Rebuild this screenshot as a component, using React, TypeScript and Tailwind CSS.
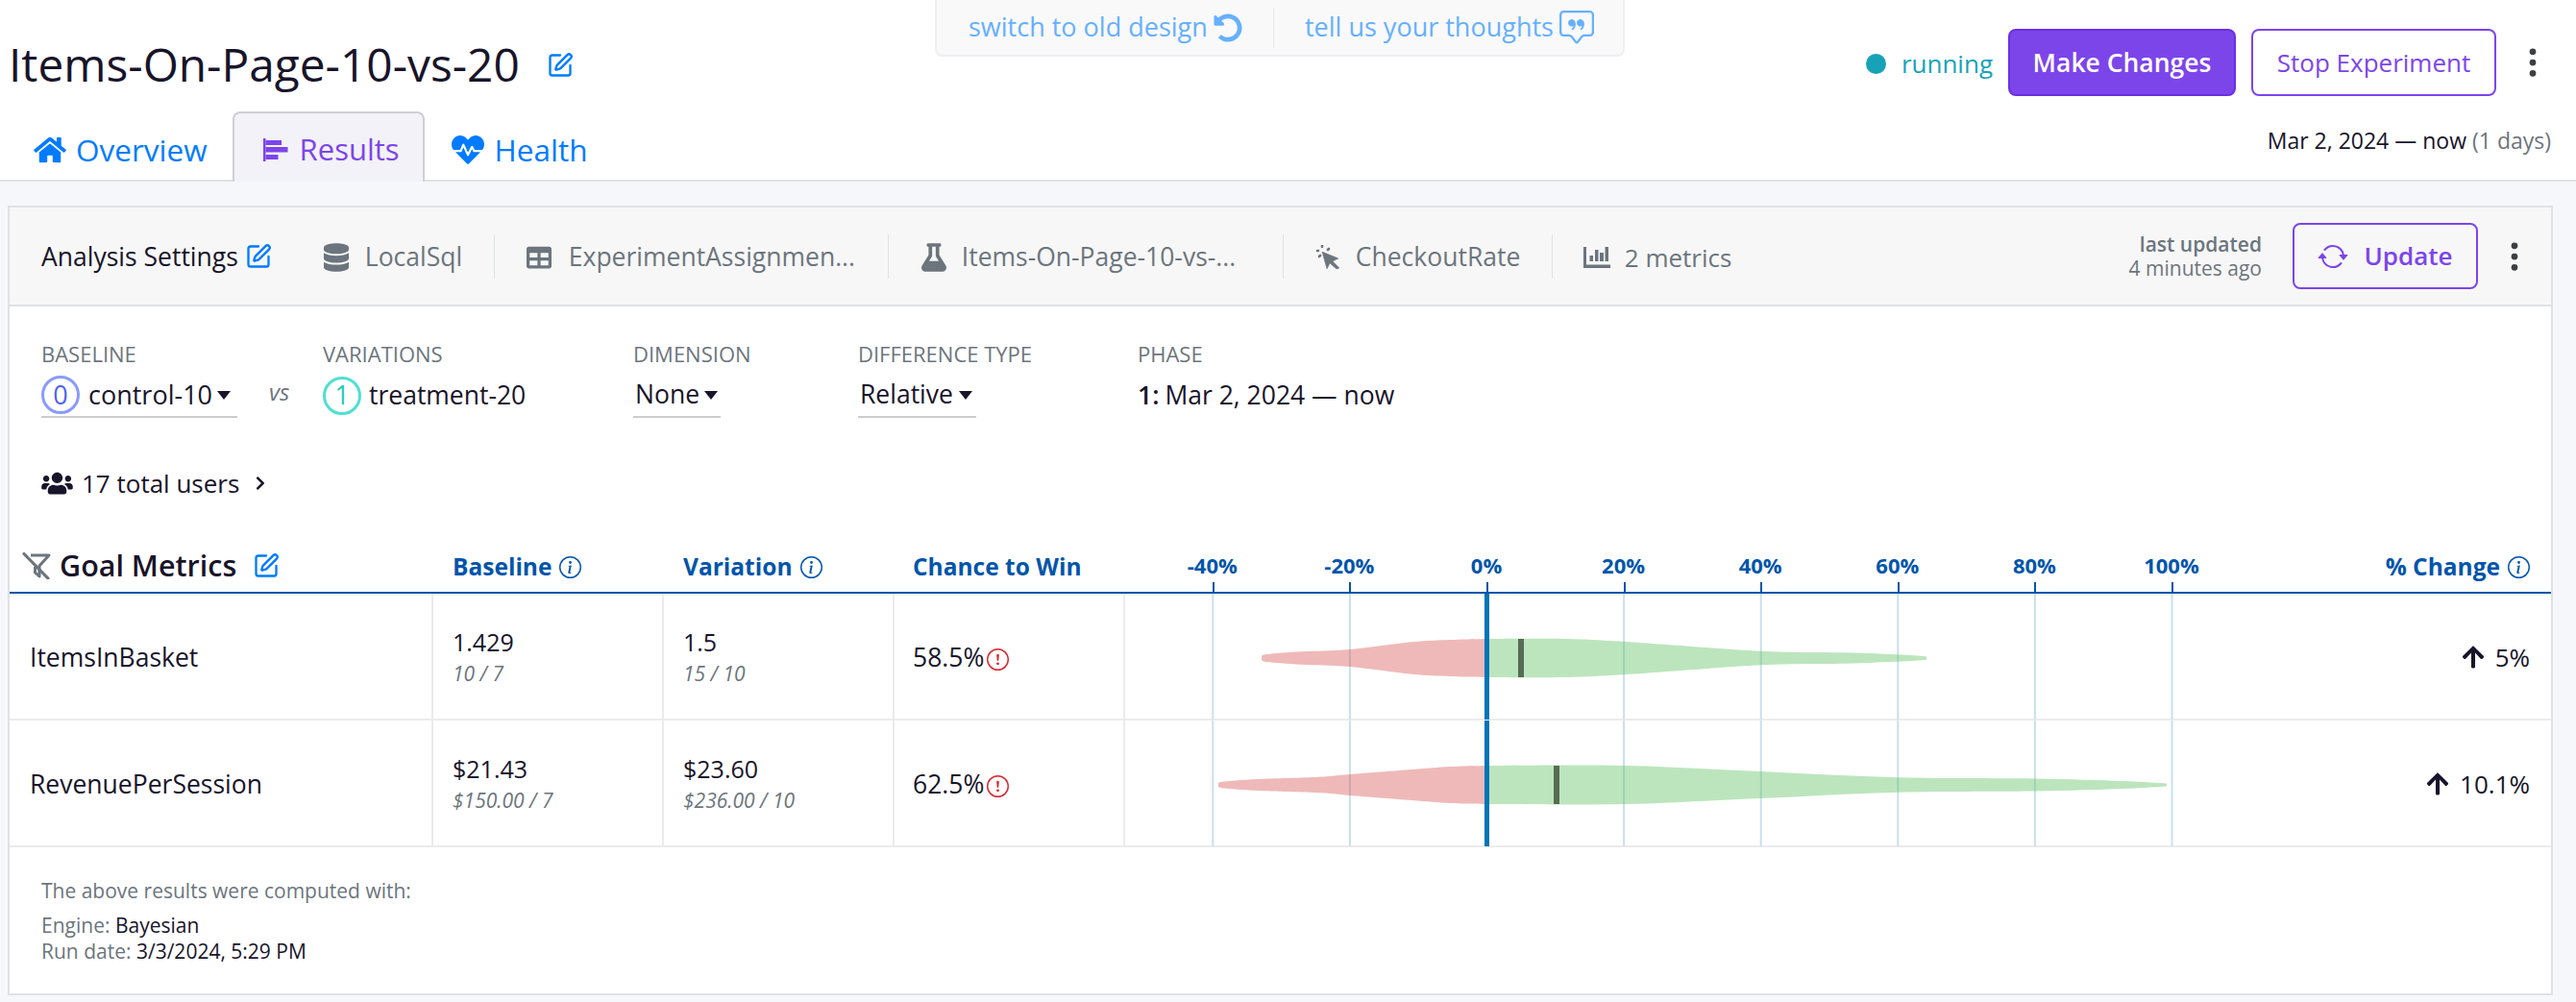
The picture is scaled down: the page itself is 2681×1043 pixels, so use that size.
import React from "react";
import { FaHome, FaHeartbeat, FaDatabase, FaTable, FaFlask, FaUsers, FaChevronRight, FaArrowUp, FaUndoAlt } from "react-icons/fa";
import { BsArrowRepeat, BsChatSquareQuote, BsInfoCircle, BsExclamationCircle, BsThreeDotsVertical } from "react-icons/bs";
import { SquarePen } from "lucide-react";

const ticks = [-40, -20, 0, 20, 40, 60, 80, 100];
const PX = 7.13;
const ZERO = 378;

function smooth(pts: number[][]) {
  let d = `M${pts[0][0]} ${pts[0][1]}`;
  for (let i = 0; i < pts.length - 1; i++) {
    const p0 = pts[Math.max(i - 1, 0)], p1 = pts[i], p2 = pts[i + 1], p3 = pts[Math.min(i + 2, pts.length - 1)];
    d += ` C${p1[0] + (p2[0] - p0[0]) / 6} ${p1[1] + (p2[1] - p0[1]) / 6} ${p2[0] - (p3[0] - p1[0]) / 6} ${p2[1] - (p3[1] - p1[1]) / 6} ${p2[0]} ${p2[1]}`;
  }
  return d;
}

function violin(shape: number[][], cy: number) {
  const top = shape.map(([x, h]) => [x, cy - h]);
  const bottom = [...shape].reverse().map(([x, h]) => [x, cy + h]);
  return smooth(top) + " L" + smooth(bottom).slice(1) + " Z";
}

function ChartCell({ neg, pos, mean, cy }: { neg: number[][]; pos: number[][]; mean: number; cy: number }) {
  return (
    <svg width="1216" height="131" className="block">
      <line x1="1" x2="1" y1="0" y2="131" stroke="#ebebed" strokeWidth="2" />
      {ticks.map((t) => (
        <line key={t} x1={ZERO + t * PX + 0.5} x2={ZERO + t * PX + 0.5} y1="0" y2="131" stroke="#c8e0ec" strokeWidth="2" />
      ))}
      <path d={violin(neg, cy)} fill="#d75050" fillOpacity="0.4" />
      <path d={violin(pos, cy)} fill="#63c367" fillOpacity="0.43" />
      <rect x={mean} y={cy - 20} width="6" height="40" fill="#586b54" />
      <rect x={ZERO - 2} y="0" width="5" height="131" fill="#0075b6" />
    </svg>
  );
}

const rows = [
  {
    name: "ItemsInBasket", base: "1.429", baseSub: "10 / 7", vari: "1.5", variSub: "15 / 10", chance: "58.5%", change: "5%", mean: 411, cy: 67,
    neg: [[144, 2], [150, 4], [185, 6.7], [236, 9], [300, 16.7], [340, 19], [378, 20]],
    pos: [[378, 20], [459, 20], [523, 17], [663, 7.3], [750, 5.7], [810, 3.5], [836, 1.7]],
  },
  {
    name: "RevenuePerSession", base: "$21.43", baseSub: "$150.00 / 7", vari: "$23.60", variSub: "$236.00 / 10", chance: "62.5%", change: "10.1%", mean: 448, cy: 67,
    neg: [[99, 2], [105, 3.5], [140, 6], [204, 8.3], [236, 11], [300, 16], [340, 19], [378, 20]],
    pos: [[378, 20], [523, 20], [663, 14], [806, 7.7], [948, 6.5], [1040, 4], [1086, 1.5]],
  },
];

function Edit({ className }: { className: string }) {
  return <SquarePen className={className} strokeWidth={2} />;
}

function Divider() {
  return <span className="w-px h-[46px] bg-[#dee2e6]" />;
}

function FilterOff() {
  return (
    <svg viewBox="0 0 30 28" className="w-[30px] h-[28px]" fill="none" stroke="#6c757d">
      <path d="M9 3H28L18 14V25L13.500 21V15" strokeWidth="3" strokeLinejoin="round" />
      <path d="M2 1.500L27 27" strokeLinecap="round" strokeWidth="3.200" />
    </svg>
  );
}

function Clicker() {
  return (
    <svg viewBox="0 0 26 26" className="w-[26px] h-[26px]" fill="#6c757d" stroke="#6c757d">
      <path d="M7 7L24 14L18 17L25 24L22 25L15 19L12 25Z" strokeWidth="0.500" strokeLinejoin="round" />
      <path d="M7 1v1M14 4l-1 1M2 6h1M4 12l1-1" strokeWidth="2.600" strokeLinecap="round" />
    </svg>
  );
}

function MetricsIcon() {
  return (
    <svg viewBox="0 0 28 22" className="w-[28px] h-[22px]" fill="#6c757d">
      <path d="M0 0h3v18.500h25V22H0z" />
      <path d="M6.500 9H10v6H6.500zM12 3h3.500v12H12zM17 6h4v9h-4zM22.500 0H26v15h-3.500z" />
    </svg>
  );
}

function ResultsIcon() {
  return (
    <svg viewBox="0 0 26 24" className="w-[26px] h-[24px]" fill="currentColor">
      <path d="M0 0h2.500v24H0z" />
      <path d="M2.500 2H19v5H2.500zM2.500 9H25.500v5.500H2.500zM2.500 17H15.500v5H2.500z" />
    </svg>
  );
}

export default function App() {
  return (
    <div className="w-[2681px] h-[1043px] overflow-hidden bg-white text-[#18142a] font-['Open_Sans',sans-serif] relative">
      <div className="absolute left-[973px] top-0 w-[718px] h-[59px] bg-[#f9f9fa] border-2 border-t-0 border-[#eeeff2] rounded-b-lg flex items-center text-[27px] text-[#66b0ff]">
        <div className="flex items-center gap-[6px] pl-[33px] w-[350px]">
          <span className="whitespace-nowrap">switch to old design</span>
          <FaUndoAlt className="w-[30px] h-[30px] shrink-0" />
        </div>
        <span className="w-px h-[42px] bg-[#e6e6ea]" />
        <div className="flex items-center gap-[6px] pl-[32px]">
          <span className="whitespace-nowrap">tell us your thoughts</span>
          <BsChatSquareQuote className="w-[36px] h-[36px] shrink-0" />
        </div>
      </div>

      <div className="h-[189px] border-b-2 border-[#dee2e6] flex flex-col">
        <div className="flex items-start h-[115px] pt-[30px]">
          <h1 className="pl-[9px] mt-[9px] text-[47.800px] leading-[56px] font-normal whitespace-nowrap">Items-On-Page-10-vs-20</h1>
          <Edit className="w-[28px] h-[28px] text-[#007bff] ml-[28px] mt-[24px]" />
          <div className="ml-auto flex items-center pr-[27px] h-[70px]">
            <span className="w-[21px] h-[21px] rounded-full bg-[#17a2b8] mt-[2px]" />
            <span className="ml-4 pt-[3px] text-[26px] text-[#17a2b8]">running</span>
            <button className="ml-4 w-[237px] h-[70px] pt-[2px] bg-[#7c45ea] border-2 border-[#6b2fe3] rounded-lg text-white text-[26.500px] font-semibold">Make Changes</button>
            <button className="ml-4 w-[255px] h-[70px] border-2 border-[#7c45ea] rounded-lg text-[#7c45ea] text-[26px]">Stop Experiment</button>
            <BsThreeDotsVertical className="w-[36px] h-[36px] ml-[20px] text-[#3c4043]" />
          </div>
        </div>
        <div className="flex items-start flex-1">
          <div className="flex items-end h-full ml-[8px]">
            <div className="flex items-center gap-[10px] pl-[27px] pr-[26px] pt-[10px] h-[72px] text-[#007bff] text-[31.500px]">
              <FaHome className="w-[34px] h-[30px]" />
              <span>Overview</span>
            </div>
            <div className="flex items-center gap-[12px] pl-[30px] pt-[4px] h-[73px] w-[200px] -mb-[2px] text-[#7c45ea] text-[31px] bg-[#f3f2f8] border-2 border-b-0 border-[#cfcfd4] rounded-t-lg">
              <ResultsIcon />
              <span>Results</span>
            </div>
            <div className="flex items-center gap-[10px] px-[27px] pt-[10px] h-[72px] text-[#007bff] text-[31.500px]">
              <FaHeartbeat className="w-[36px] h-[34px]" />
              <span>Health</span>
            </div>
          </div>
          <div className="ml-auto pr-[26px] pt-[14px] text-[23px] leading-[34px]">
            Mar 2, 2024 — now <span className="text-[#6c757d]">(1 days)</span>
          </div>
        </div>
      </div>

      <div className="h-[854px] bg-[#f5f7fa] pt-[25px] pl-[8px] pr-[24px]">
        <div className="h-[822px] bg-white border-2 border-[#dee2e6]">
          <div className="h-[103px] bg-[#f7f7f7] border-b-2 border-[#dee2e6] flex items-center pl-[33px] pr-[20px] text-[26.500px]">
            <span className="pt-[3px]">Analysis Settings</span>
            <Edit className="w-[28px] h-[28px] text-[#007bff] ml-[7px]" />
            <div className="flex items-center gap-[17px] ml-[54px] text-[#6c757d] pt-[3px] whitespace-nowrap">
              <FaDatabase className="w-[26px] h-[30px]" />
              <span className="w-[134px]">LocalSql</span>
            </div>
            <Divider />
            <div className="flex items-center gap-[17px] ml-[32px] text-[#6c757d] pt-[3px] whitespace-nowrap">
              <FaTable className="w-[28px] h-[26px]" />
              <span className="w-[332px]">ExperimentAssignmen...</span>
            </div>
            <Divider />
            <div className="flex items-center gap-[16px] ml-[34px] text-[#6c757d] pt-[3px] whitespace-nowrap">
              <FaFlask className="w-[26px] h-[30px]" />
              <span className="w-[334px]">Items-On-Page-10-vs-...</span>
            </div>
            <Divider />
            <div className="flex items-center gap-[16px] ml-[33px] text-[#6c757d] pt-[3px] whitespace-nowrap">
              <Clicker />
              <span className="w-[204px]">CheckoutRate</span>
            </div>
            <Divider />
            <div className="flex items-center gap-[15px] ml-[32px] text-[26px] text-[#6c757d] pt-[3px] whitespace-nowrap">
              <MetricsIcon />
              <span>2 metrics</span>
            </div>
            <div className="ml-auto text-right leading-[25px] text-[#6c757d] text-[21px]">
              <div className="font-semibold">last updated</div>
              <div>4 minutes ago</div>
            </div>
            <button className="ml-[32px] w-[193px] h-[69px] border-2 border-[#7c45ea] rounded-lg text-[#7c45ea] text-[26px] font-semibold flex items-center justify-center gap-[16px]">
              <BsArrowRepeat className="w-[32px] h-[32px]" />
              Update
            </button>
            <BsThreeDotsVertical className="w-[36px] h-[36px] ml-[20px] text-[#3c4043]" />
          </div>

          <div className="flex pl-[33px] pt-[36px] h-[169px]">
            <div className="w-[293px] flex">
              <div className="w-[204px]">
                <div className="text-[22px] leading-[26px] text-[#6c757d]">BASELINE</div>
                <div className="flex items-center mt-[8px] h-[46px] border-b-2 border-[#ccc] text-[27px] whitespace-nowrap">
                  <span className="w-[40px] h-[40px] rounded-full border-[3px] border-[#8a9bfc] text-[#4f62f0] flex items-center justify-center">0</span>
                  <span className="ml-[9px]">control-10</span>
                  <span className="ml-[5px] border-x-[7.500px] border-x-transparent border-t-[9px] border-t-[#18142a]" />
                </div>
              </div>
              <span className="ml-[33px] mt-[35px] italic text-[#6c757d] text-[24px]">vs</span>
            </div>
            <div className="w-[323px]">
              <div className="text-[22px] leading-[26px] text-[#6c757d]">VARIATIONS</div>
              <div className="flex items-center mt-[8px] h-[46px] text-[26.500px] whitespace-nowrap">
                <span className="w-[40px] h-[40px] rounded-full border-[3px] border-[#4fe0d2] text-[#25c8b8] flex items-center justify-center">1</span>
                <span className="ml-2">treatment-20</span>
              </div>
            </div>
            <div className="w-[234px]">
              <div className="text-[22px] leading-[26px] text-[#6c757d]">DIMENSION</div>
              <div className="flex items-center w-[91px] mt-[8px] h-[46px] border-b-2 border-[#ccc] text-[26.500px] pl-[2px]">
                <span>None</span>
                <span className="ml-[5px] border-x-[7.500px] border-x-transparent border-t-[9px] border-t-[#18142a]" />
              </div>
            </div>
            <div className="w-[291px]">
              <div className="text-[22px] leading-[26px] text-[#6c757d] whitespace-nowrap">DIFFERENCE TYPE</div>
              <div className="flex items-center w-[123px] mt-[8px] h-[46px] border-b-2 border-[#ccc] text-[26.500px] pl-[2px]">
                <span>Relative</span>
                <span className="ml-[6px] border-x-[7.500px] border-x-transparent border-t-[9px] border-t-[#18142a]" />
              </div>
            </div>
            <div>
              <div className="text-[22px] leading-[26px] text-[#6c757d]">PHASE</div>
              <div className="flex items-center mt-[8px] h-[46px] text-[26.500px] whitespace-nowrap">
                <span className="font-semibold mr-[6px]">1:</span> Mar 2, 2024 — now
              </div>
            </div>
          </div>

          <div className="h-[30px] pl-[33px] flex items-center text-[26px]">
            <FaUsers className="w-[33px] h-[26px]" />
            <span className="ml-[9px]">17 total users</span>
            <FaChevronRight className="w-[14px] h-[16px] ml-[15px]" />
          </div>

          <div className="mt-[43px] h-[57px] border-b-2 border-[#0055aa] flex text-[#0055aa] font-bold text-[24.500px]">
            <div className="w-[439px] flex items-center pl-[13px] pt-[1px] text-[#18142a]">
              <FilterOff />
              <span className="ml-[9px] text-[30.500px] font-semibold whitespace-nowrap">Goal Metrics</span>
              <Edit className="w-[28px] h-[28px] text-[#007bff] ml-[17px]" />
            </div>
            <div className="w-[240px] flex items-center gap-2 pl-[22px] pt-[3px]">Baseline <BsInfoCircle className="w-[23px] h-[23px]" /></div>
            <div className="w-[240px] flex items-center gap-2 pl-[22px] pt-[3px]">Variation <BsInfoCircle className="w-[23px] h-[23px]" /></div>
            <div className="w-[240px] flex items-center pl-[21px] pt-[3px] whitespace-nowrap">Chance to Win</div>
            <div className="w-[1216px] relative">
              {ticks.map((t) => (
                <React.Fragment key={t}>
                  <span className="absolute bottom-[11px] -translate-x-1/2 text-[22px] whitespace-nowrap" style={{ left: ZERO + t * PX }}>{t}%</span>
                  <span className="absolute bottom-0 h-[10px] w-[2px] bg-[#0055aa]" style={{ left: ZERO + t * PX }} />
                </React.Fragment>
              ))}
            </div>
            <div className="flex-1 flex items-center justify-end gap-2 pr-[22px] pt-[3px] whitespace-nowrap">% Change <BsInfoCircle className="w-[23px] h-[23px]" /></div>
          </div>

          {rows.map((r) => (
            <div key={r.name} className="h-[132px] border-b-2 border-[#ebebed] flex text-[25px]">
              <div className="w-[439px] flex items-center pl-[21px] pt-[4px] font-medium text-[26.500px]">{r.name}</div>
              <div className="w-[240px] border-l-2 border-[#ebebed] flex flex-col justify-center pl-[20px]">
                <div className="leading-[36px]">{r.base}</div>
                <div className="leading-[30px] italic text-[#6c757d] text-[21px]">{r.baseSub}</div>
              </div>
              <div className="w-[240px] border-l-2 border-[#ebebed] flex flex-col justify-center pl-[20px]">
                <div className="leading-[36px]">{r.vari}</div>
                <div className="leading-[30px] italic text-[#6c757d] text-[21px]">{r.variSub}</div>
              </div>
              <div className="w-[240px] border-l-2 border-[#ebebed] flex items-center pl-[19px] pt-[3px] text-[26.500px]">
                {r.chance}
                <BsExclamationCircle className="w-[23px] h-[23px] ml-[3px] mt-[3px] text-[#d9292f]" />
              </div>
              <div className="w-[1216px]">
                <ChartCell neg={r.neg} pos={r.pos} mean={r.mean} cy={r.cy} />
              </div>
              <div className="flex-1 flex items-center justify-end pr-[22px] pt-[2px] text-[26px] whitespace-nowrap">
                <FaArrowUp className="w-[24px] h-[26px] mr-[11px]" />
                {r.change}
              </div>
            </div>
          ))}

          <div className="pl-[33px] pt-[32px] text-[21px] text-[#6c757d]">
            <div className="leading-[27px]">The above results were computed with:</div>
            <div className="leading-[27px] mt-[9px]">Engine: <span className="text-[#18142a]">Bayesian</span></div>
            <div className="leading-[27px]">Run date: <span className="text-[#18142a]">3/3/2024, 5:29 PM</span></div>
          </div>
        </div>
      </div>
    </div>
  );
}
